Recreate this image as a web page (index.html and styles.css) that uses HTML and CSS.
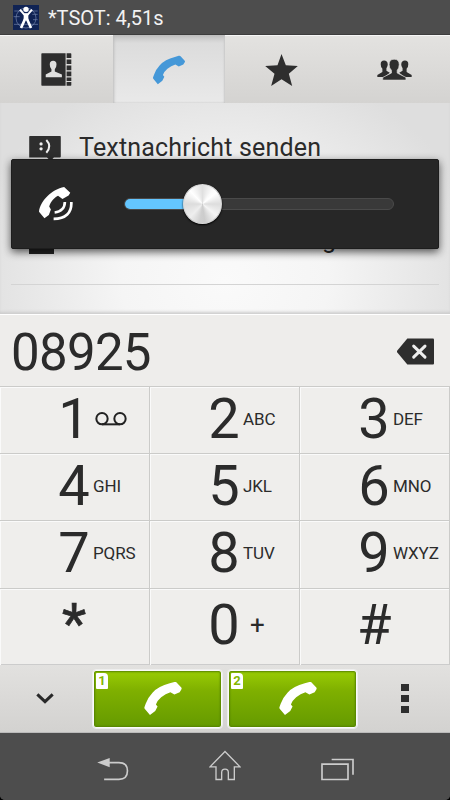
FILE: index.html
```html
<!DOCTYPE html>
<html lang="de">
<head>
<meta charset="utf-8">
<title>Telefon</title>
<link rel="stylesheet" href="styles.css">
</head>
<body>
<svg width="0" height="0" class="defs">
  <symbol id="handset" viewBox="0 0 113 100"><path d="M77 4L91 0Q96 -1 99 3L112 17Q114 20 112 23L107 31L91 38L79 31Q64 35 51 46Q38 57 35 68L40 74L33 88L17 100L1 81Q-1 78 1 74L4 66Q9 49 24 33Q42 13 77 4Z"/></symbol>
</svg>
<div class="phone">
  <header class="status">
    <svg class="app" viewBox="0 0 78 75"><path d="M0 0h78v75H0z" fill="#102354"/><g fill="none" stroke="#7587ad" stroke-width="2"><circle cx="39" cy="39" r="30"/><path d="M4 18h70M3 58h72M2 35h18M58 28h16M60 44h14"/></g><g fill="none" stroke="#fff"><path d="M21 14l12 14h12l12-14" stroke-width="6"/><path d="M39 26v20" stroke-width="14"/><path d="M36 42L24 69M42 42l12 27" stroke-width="8"/></g><circle cx="39" cy="13" r="8" fill="#fff"/></svg>
    <span class="status-text">*TSOT: 4,51s</span>
  </header>
  <nav class="tabs">
    <div class="tab"><svg class="contacts" viewBox="0 0 92 98"><path d="M3 1h70v96H3q-2 0-2-2V3q0-2 2-2zM76 1h12q2 0 2 2v12H76zM76 19h14v14H76zM76 37h14v14H76zM76 55h14v14H76zM76 73h14v10H76zM76 86h14v9q0 2-2 2H76z" fill="#2e2e2e"/><path d="M26 34q0-11 10-11t10 11q0 9-5 14v7l21 9v8H14v-8l17-9v-7q-5-5-5-14z" fill="#e0e0df"/></svg></div>
    <div class="tab active"><svg class="call-tab" fill="#4598d8"><use href="#handset"/></svg></div>
    <div class="tab"><svg class="star" viewBox="0 0 98 96"><path d="M49 0L62 34L98 36L71 59L81 96L49 76L18 96L28 59L0 36L37 34Z" fill="#2e2e2e"/></svg></div>
    <div class="tab"><svg class="group" viewBox="0 0 104 64"><g fill="#2e2e2e"><path d="M11 15Q11 4 21 4Q31 4 32 15Q32 22 28 27V34L38 40L22 53H1V47L16 38V28Q11 24 11 15ZM93 15Q93 4 83 4Q73 4 72 15Q72 22 76 27V34L66 40L82 53H103V47L88 38V28Q93 24 93 15Z"/><path stroke="#dedddb" stroke-width="2" d="M36 16Q36 0 51 0Q66 0 66 16Q66 27 60 33V41L86 54V62H17V54L43 41V33Q36 27 36 16Z"/></g></svg></div>
  </nav>
  <main class="content">
    <div class="option first"><svg class="message" viewBox="0 0 96 76"><path d="M2 0h92q2 0 2 2v60q0 3-3 3H75L65 76L54 65H0V2q0-2 2-2z" fill="#2e2e2e"/><circle cx="36" cy="24" r="5" fill="#eee"/><circle cx="36" cy="39" r="5" fill="#eee"/><path d="M52 12q18 19 0 39" fill="none" stroke="#eee" stroke-width="6"/></svg><span>Textnachricht senden</span></div>
    <div class="option second"><svg class="person" viewBox="0 0 26 30"><path d="M8 7a5 6 0 0 1 10 0q0 5-3 8v3l10 5v7H0v-7l10-5v-3q-3-3-2-8z" fill="#242424"/></svg><span>Kontakt hinzufügen</span></div>
    <section class="volume">
      <svg class="volume-icon" viewBox="0 0 100 100"><path fill="#fff" d="M74 0L92 17L87 25L69 35L56 26C45 31 34 44 30 57L35 66L29 82L16 92L0 73C3 42 38 6 74 0Z"/><path d="M76 44C76 61 65 73 46 75M95 44C97 76 78 94 43 94" fill="none" stroke="#fff" stroke-width="8"/></svg>
      <div class="track"><div class="level"></div><div class="knob"></div></div>
    </section>
  </main>
  <section class="number"><span>08925</span><svg class="delete" viewBox="0 0 111 80"><path d="M31 1H108Q111 1 111 4V76Q111 79 108 79H31L1 43Q-1 40 1 37Z" fill="#2e2e2e"/><path d="M50 24L84 57M84 24L50 57" stroke="#eee" stroke-width="9" stroke-linecap="round"/></svg></section>
  <section class="keypad">
    <div class="key"><b>1</b><svg class="voicemail" viewBox="0 0 94 42"><g fill="none" stroke="#222" stroke-width="6"><circle cx="20" cy="20" r="17"/><circle cx="74" cy="20" r="17"/><path d="M20 37h54"/></g></svg></div>
    <div class="key"><b>2</b><span>ABC</span></div><div class="key"><b>3</b><span>DEF</span></div>
    <div class="key"><b>4</b><span>GHI</span></div><div class="key"><b>5</b><span>JKL</span></div><div class="key"><b>6</b><span>MNO</span></div>
    <div class="key"><b>7</b><span>PQRS</span></div><div class="key"><b>8</b><span>TUV</span></div><div class="key"><b>9</b><span>WXYZ</span></div>
    <div class="key low"><b class="asterisk">*</b></div><div class="key low"><b>0</b><span class="plus">+</span></div><div class="key low"><b class="hash">#</b></div>
  </section>
  <section class="actions">
    <div class="side"><svg class="chevron" viewBox="0 0 54 33"><path d="M4 4L27 26L50 4" fill="none" stroke="#292929" stroke-width="9"/></svg></div>
    <div class="call"><span class="sim">1</span><svg class="handset"><use href="#handset"/></svg></div>
    <div class="call"><span class="sim">2</span><svg class="handset"><use href="#handset"/></svg></div>
    <div class="side more"><i></i><i></i><i></i></div>
  </section>
  <footer class="nav">
    <svg class="back" viewBox="0 0 96 70"><path d="M0 14L38 0V28Z" fill="#ccc"/><path d="M36 14H66Q92 14 92 39Q92 65 66 65H21" fill="none" stroke="#ccc" stroke-width="5"/></svg>
    <svg class="home" viewBox="0 0 96 92"><path d="M48 4L3 50H21V88H38V67Q38 57 48 57Q58 57 58 67V88H76V50H93Z" fill="none" stroke="#ccc" stroke-width="4"/></svg>
    <svg class="recent" viewBox="0 0 99 68"><path d="M3 18H81V64H3ZM32 4H96V50" fill="none" stroke="#ccc" stroke-width="5"/></svg>
  </footer>
</div>
</body>
</html>
```
FILE: styles.css
```css
* { box-sizing: border-box; }
body { margin: 0; background: #000; font-family: Roboto, "Liberation Sans", sans-serif; color: #2b2b2b; }
svg { display: block; flex: none; }
.defs { position: absolute; }
.phone { width: 450px; height: 800px; display: flex; flex-direction: column; overflow: hidden; background: #4d4d4d; border-radius: 0 0 5px 5px; }
.status { height: 35px; flex: none; display: flex; align-items: center; padding-left: 13px; background: #4d4d4d; border-bottom: 1px solid #3d3d3d; }
.app { width: 26px; height: 25px; }
.status-text { margin-left: 9px; font-size: 20px; line-height: 34px; padding-top: 2px; color: #f2f2f2; letter-spacing: 0; }
.tabs { height: 68px; flex: none; display: grid; grid-template-columns: 113px 112px 112px 113px; background: linear-gradient(#e3e2e0, #d4d3d1); border-top: 1px solid #f6f6f6; }
.tab { display: flex; align-items: center; justify-content: center; }
.active { margin-top: -1px; background: linear-gradient(#c2c2c2, #dcdcdc 12%, #e9e9e9); box-shadow: inset 1px 1px 3px #bbb, inset -1px 0 2px #ccc; }
.contacts { width: 31px; height: 33px; }
.call-tab { width: 32px; height: 32px; margin-top: 1px; }
.star { width: 33px; height: 32px; margin-top: 1px; }
.group { width: 35px; height: 22px; margin: 1px 0 0 1px; }
.content { height: 211px; flex: none; position: relative; padding: 14px 11px 0; background: radial-gradient(ellipse 260px 220px at 50% 84%, #fafafa, #f5f5f5 40%, #dedede 100%); box-shadow: inset 0 -3px 3px -1px #ccc; }
.option { display: flex; align-items: center; font-size: 25px; padding-left: 18px; white-space: nowrap; }
.option span { line-height: 30px; }
.first { height: 63px; }
.first span { margin: -2px 0 0 18px; letter-spacing: .17px; }
.second { height: 105px; padding-top: 25px; border-bottom: 1px solid #d4d4d4; }
.second span { margin: -10px 0 0 25px; letter-spacing: 4.5px; }
.message { width: 32px; height: 25px; margin-top: 0; }
.person { width: 26px; height: 30px; margin-top: -12px; }
.volume { position: absolute; left: 11px; top: 56px; width: 428px; height: 90px; display: flex; align-items: center; background: #272727; border: 1px solid #1d1d1d; border-radius: 2px; box-shadow: 0 3px 9px rgba(0,0,0,.65); padding-left: 27px; }
.volume-icon { width: 34px; height: 34px; }
.track { width: 270px; height: 12px; margin: 0 0 0 51px; border: 1px solid #4a4a4a; border-radius: 6px; background: #393939; position: relative; }
.level { width: 79px; height: 10px; border-radius: 5px 0 0 5px; background: #64c6ff; }
.knob { position: absolute; left: 58px; top: -15px; width: 39px; height: 40px; border-radius: 50%; background: conic-gradient(#e0e0e0, #fafafa 10%, #fff 14%, #ddd 25%, #f5f5f5 36%, #ccc 48%, #cfcfcf 52%, #eee 62%, #dcdcdc 75%, #fff 88%, #e0e0e0); border: 1px solid #d7d7d7; box-shadow: 0 1px 2px #000; }
.number { height: 72px; flex: none; display: flex; align-items: center; justify-content: space-between; padding: 4px 16px 0 11px; background: #eeedeb; border-top: 1px solid #fff; }
.number span { font-size: 51px; line-height: 64px; letter-spacing: -.7px; }
.delete { width: 37px; height: 27px; margin-top: -3px; }
.keypad { height: 279px; flex: none; display: grid; grid-template-columns: repeat(3, 1fr); grid-template-rows: 67px 67px 68px 77px; background: #efeeec; border-bottom: 1px solid #ccc; }
.key { display: flex; align-items: center; border: solid #cbcbc9; border-width: 1px 1px 0 0; box-shadow: inset 1px 1px #fafafa; }
.key b { font-weight: 400; font-size: 56px; line-height: 66px; width: 32px; margin-left: 58px; text-align: center; margin-top: -3px; }
.key span { font-size: 17px; line-height: 20px; margin: -3px 0 0 3px; letter-spacing: -.1px; }
.voicemail { width: 32px; height: 14px; margin: -2px 0 0 5px; }
.low b { margin-top: -5px; }
.low .plus { font-size: 26px; margin: -4px 0 0 10px; }
.low .asterisk { margin-top: -6px; -webkit-text-stroke: .7px #2b2b2b; }
.low .hash { margin-left: 57px; }
.actions { height: 68px; flex: none; display: grid; grid-template-columns: 87px 129px 129px 87px; column-gap: 6px; background: linear-gradient(#e2e1df, #d3d2d0); border-bottom: 1px solid #bbb; align-items: center; }
.side { display: flex; justify-content: center; padding-left: 3px; }
.chevron { width: 18px; height: 11px; }
.call { height: 58px; position: relative; display: flex; align-items: center; justify-content: center; border: 1px solid #fafafa; outline: 1px solid #eee; border-radius: 3px; background: linear-gradient(#99cc04, #7fb000 35%, #659a00); box-shadow: inset 0 0 2px 1px #558200; padding-left: 10px; }
.handset { width: 38px; height: 33px; fill: #fff; }
.sim { position: absolute; left: 2px; top: 2px; width: 12px; height: 16px; border-radius: 1px 4px 1px 1px; background: #fff; color: #83b600; font-size: 13px; font-weight: 700; line-height: 16px; text-align: center; }
.more { flex-direction: column; align-items: center; gap: 4px; padding: 0 4px 0 0; }
.more i { width: 8px; height: 7px; background: #2e2e2e; }
.nav { height: 67px; flex: none; display: flex; background: #4d4d4d; }
.back { width: 32px; height: 23px; margin: 25px 0 0 97px; }
.home { width: 32px; height: 31px; margin: 17px 0 0 80px; }
.recent { width: 33px; height: 23px; margin: 25px 0 0 80px; }
```
